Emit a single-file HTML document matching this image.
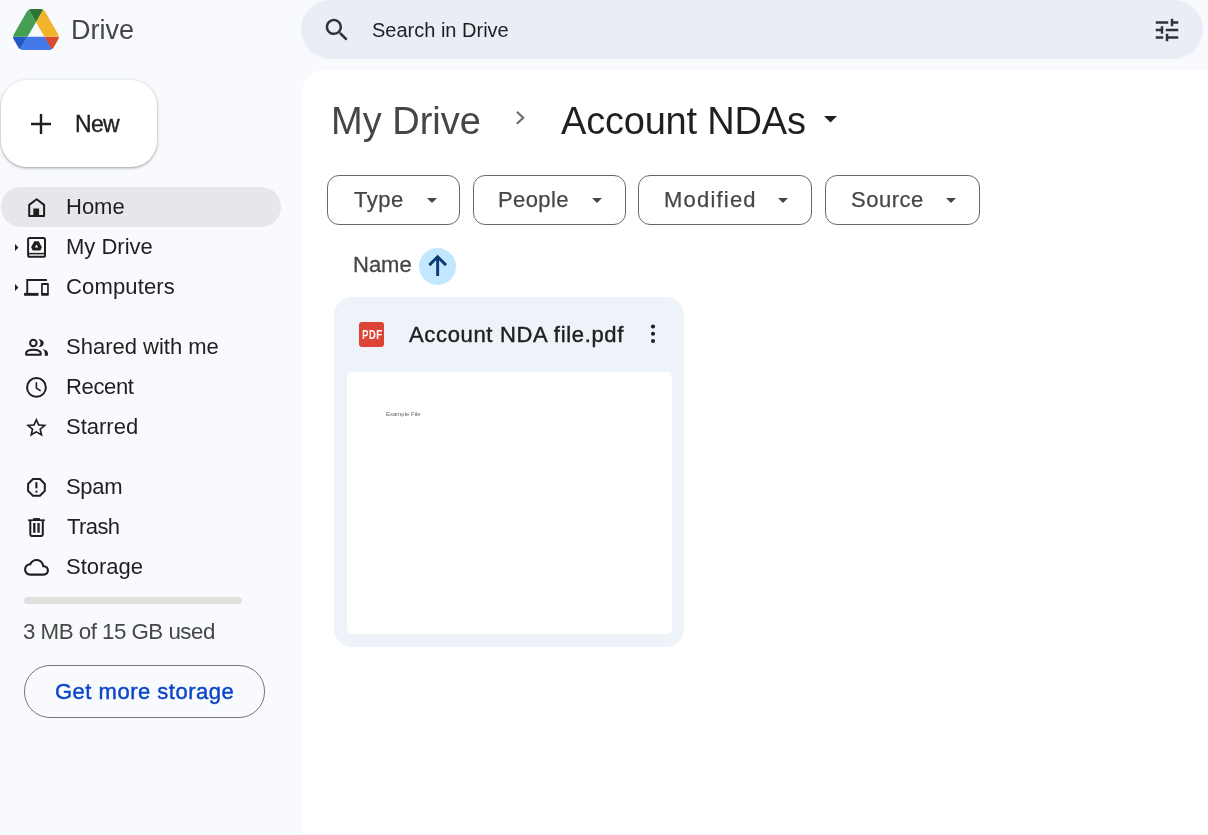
<!DOCTYPE html>
<html><head><meta charset="utf-8">
<style>
html,body{margin:0;padding:0;}
body{width:1208px;height:835px;overflow:hidden;background:#f8fafd;position:relative;font-family:"Liberation Sans",sans-serif;}
.a{position:absolute;}
.t{position:absolute;white-space:nowrap;line-height:1;will-change:transform;}
svg{position:absolute;overflow:visible;}
</style></head><body>

<!-- logo -->
<svg class="a" style="left:13px;top:9px" width="46" height="41" viewBox="0 0 87.3 78">
<path d="m6.6 66.85 3.85 6.65c.8 1.4 1.950 2.5 3.3 3.3l13.75-23.8h-27.5c0 1.55.4 3.1 1.2 4.5z" fill="#2359c4"/>
<path d="m43.65 25-13.75-23.8c-1.35.8-2.5 1.9-3.3 3.3l-25.4 44a9.06 9.06 0 0 0 -1.2 4.5h27.5z" fill="#46a052"/>
<path d="m73.55 76.8c1.350-.8 2.5-1.9 3.3-3.3l1.6-2.75 7.65-13.25c.8-1.4 1.2-2.95 1.2-4.5h-27.502l5.852 11.5z" fill="#d94a30"/>
<path d="m43.65 25 13.75-23.8c-1.35-.8-2.9-1.2-4.5-1.2h-18.5c-1.6 0-3.15.45-4.5 1.2z" fill="#2d7636"/>
<path d="m59.8 53h-32.3l-13.75 23.8c1.35.8 2.9 1.2 4.5 1.2h50.8c1.6 0 3.15-.45 4.5-1.2z" fill="#4479e9"/>
<path d="m73.4 26.5-12.7-22c-.8-1.4-1.95-2.5-3.3-3.3l-13.75 23.8 16.15 28h27.45c0-1.55-.4-3.1-1.2-4.5z" fill="#f1b42c"/>
</svg>
<div class="t" style="left:71px;top:17px;font-size:27px;color:#444746">Drive</div>

<!-- search -->
<div class="a" style="left:301px;top:0px;width:902px;height:59px;border-radius:0 0 30px 30px;background:#e9eef6;border-top-left-radius:30px;border-top-right-radius:30px"></div>
<svg style="left:322px;top:15px" width="30" height="30" viewBox="0 0 24 24"><path fill="#303234" d="M15.5 14h-.79l-.28-.27C15.410 12.59 16 11.11 16 9.5 16 5.91 13.09 3 9.5 3S3 5.91 3 9.5 5.91 16 9.5 16c1.61 0 3.09-.59 4.23-1.57l.27.28v.79l5 4.99L20.49 19l-4.99-5zm-6 0C7.01 14 5 11.99 5 9.5S7.01 5 9.5 5 14 7.01 14 9.5 11.99 14 9.5 14z"/></svg>
<div class="t" style="left:372px;top:20px;font-size:20px;color:#1f1f1f">Search in Drive</div>
<svg style="left:1152px;top:15px" width="30" height="30" viewBox="0 0 24 24"><path fill="#303234" d="M3 17v2h6v-2H3zM3 5v2h10V5H3zm10 16v-2h8v-2h-8v-2h-2v6h2zM7 9v2H3v2h4v2h2V9H7zm14 4v-2H11v2h10zm-6-4h2V7h4V5h-4V3h-2v6z"/></svg>

<!-- New button -->
<div class="a" style="left:1px;top:80px;width:156px;height:87px;border-radius:26px;background:#fff;box-shadow:0 1px 2px 0 rgba(60,64,67,.3),0 1px 3px 1px rgba(60,64,67,.15)"></div>
<svg style="left:31px;top:114px" width="20" height="20" viewBox="0 0 20 20"><path d="M10 0v20M0 10h20" stroke="#1f1f1f" stroke-width="2.4"/></svg>
<div class="t" style="left:75px;top:113px;font-size:23px;color:#1f1f1f;letter-spacing:-0.7px;-webkit-text-stroke:0.35px #1f1f1f">New</div>

<!-- nav -->
<div class="a" style="left:1px;top:187px;width:280px;height:40px;border-radius:20px;background:#e6e7ea"></div>
<div class="t" style="left:66px;top:195.5px;font-size:22px;color:#1f1f1f">Home</div>
<div class="t" style="left:66px;top:235.5px;font-size:22px;color:#1f1f1f">My Drive</div>
<div class="t" style="left:66px;top:275.5px;font-size:22px;color:#1f1f1f;letter-spacing:0.15px">Computers</div>
<div class="t" style="left:66px;top:335.5px;font-size:22px;color:#1f1f1f">Shared with me</div>
<div class="t" style="left:66px;top:375.5px;font-size:22px;color:#1f1f1f;letter-spacing:-0.35px">Recent</div>
<div class="t" style="left:66px;top:415.5px;font-size:22px;color:#1f1f1f">Starred</div>
<div class="t" style="left:66px;top:475.5px;font-size:22px;color:#1f1f1f;letter-spacing:-0.3px">Spam</div>
<div class="t" style="left:67px;top:515.5px;font-size:22px;color:#1f1f1f;letter-spacing:-0.6px">Trash</div>
<div class="t" style="left:66px;top:555.5px;font-size:22px;color:#1f1f1f">Storage</div>

<!-- nav icons -->
<svg style="left:0;top:0" width="60" height="600" viewBox="0 0 60 600">
 <!-- home -->
 <path d="M29.2 215.9V204.9L36.65 199.3L44.1 204.9V215.9Z" fill="none" stroke="#1f1f1f" stroke-width="2" stroke-linejoin="round"/>
 <rect x="33.3" y="208.5" width="5.8" height="7.5" fill="#1f1f1f"/>
 <!-- arrows -->
 <path d="M15 244L18.4 247.5L15 251Z" fill="#1f1f1f"/>
 <path d="M15 284L18.4 287.5L15 291Z" fill="#1f1f1f"/>
 <!-- my drive -->
 <rect x="28.1" y="237.9" width="16.9" height="18.9" rx="1.6" fill="none" stroke="#1f1f1f" stroke-width="2"/>
 <path d="M28.1 253.6H45" stroke="#1f1f1f" stroke-width="1.5"/>
 <path fill-rule="evenodd" fill="#1f1f1f" d="M34.3 241.2H38.7L41.9 247.3L40.3 250.5H32.7L31.1 247.3ZM36.5 244.6L38.2 247.5H34.8Z"/>
 <!-- computers -->
 <path d="M26.3 280H46.9M27.25 279.5V293.5" fill="none" stroke="#1f1f1f" stroke-width="1.9"/>
 <rect x="24.1" y="292.9" width="14.4" height="2.9" fill="#1f1f1f"/>
 <path fill-rule="evenodd" fill="#1f1f1f" d="M41.9 283.1H48C48.5 283.1 48.8 283.4 48.8 283.9V295C48.8 295.5 48.5 295.8 48 295.8H41.9C41.4 295.8 41.1 295.5 41.1 295V283.9C41.1 283.4 41.4 283.1 41.9 283.1ZM42.8 285V292.9H47.1V285Z"/>
 <!-- shared -->
 <circle cx="33.35" cy="342.95" r="3.25" fill="none" stroke="#1f1f1f" stroke-width="2"/>
 <path d="M26.1 354.8V353.4C26.1 350.8 29.5 349.8 33.4 349.8C37.3 349.8 40.7 350.8 40.7 353.4V354.8Z" fill="none" stroke="#1f1f1f" stroke-width="2" stroke-linejoin="round"/>
 <path d="M38.5 339.3C41.5 339.3 43.7 341 43.7 343.2C43.7 345.4 41.5 347.1 38.5 347.1C39.8 346 40.5 344.6 40.5 343.2C40.5 341.8 39.8 340.4 38.5 339.3Z" fill="#1f1f1f"/>
 <path d="M42.5 349C45.8 349.6 47.9 351.2 47.9 353.3V355.7H44.8V353.3C44.8 351.6 44 350.1 42.5 349Z" fill="#1f1f1f"/>
 <!-- recent -->
 <circle cx="36.45" cy="387.45" r="9.4" fill="none" stroke="#1f1f1f" stroke-width="2"/>
 <path d="M36.4 382.2V388.1L40.7 390.9" fill="none" stroke="#1f1f1f" stroke-width="1.6" stroke-linejoin="round"/>
 <!-- star -->
 <path transform="translate(23.87 415.8) scale(1.04 0.98)" fill="#1f1f1f" d="M22 9.24l-7.19-.62L12 2 9.19 8.63 2 9.24l5.46 4.73L5.82 21 12 17.27 18.18 21l-1.63-7.03L22 9.24zM12 15.4l-3.76 2.27 1-4.28-3.32-2.88 4.38-.38L12 6.1l1.71 4.04 4.38.38-3.32 2.88 1 4.28L12 15.4z" transform-origin="0 0"/>
 <!-- spam -->
 <path d="M32.95 479.1H39.95L44.8 483.95V490.95L39.95 495.8H32.95L28.1 490.95V483.95Z" fill="none" stroke="#1f1f1f" stroke-width="2"/>
 <path d="M36.4 482.2V488.35" stroke="#1f1f1f" stroke-width="2.1"/>
 <circle cx="36.4" cy="491.7" r="1.1" fill="#1f1f1f"/>
 <!-- trash -->
 <path d="M28.1 520.2H44.8" stroke="#1f1f1f" stroke-width="1.7"/>
 <path d="M33.1 520V518.1H40V520Z" fill="#1f1f1f"/>
 <path d="M30.3 520.5V534.6C30.3 535.4 30.9 535.9 31.6 535.9H41.5C42.2 535.9 42.8 535.4 42.8 534.6V520.5" fill="none" stroke="#1f1f1f" stroke-width="2"/>
 <path d="M34.3 523V532.8M38.55 523V532.8" stroke="#1f1f1f" stroke-width="2.3"/>
 <!-- cloud -->
 <path transform="translate(24.1 554.85) scale(1.035 1.04)" fill="#1f1f1f" d="M19.35 10.04C18.67 6.59 15.64 4 12 4 9.110 4 6.6 5.64 5.35 8.04 2.34 8.36 0 10.91 0 14c0 3.31 2.69 6 6 6h13c2.76 0 5-2.24 5-5 0-2.64-2.05-4.78-4.65-4.96zM19 18H6c-2.21 0-4-1.79-4-4 0-2.05 1.53-3.76 3.56-3.97l1.07-.11.5-.95C8.08 7.14 9.94 6 12 6c2.62 0 4.88 1.86 5.39 4.43l.3 1.5 1.53.11c1.56.1 2.78 1.410 2.78 2.96 0 1.65-1.35 3-3 3z"/>
</svg>

<!-- storage -->
<div class="a" style="left:24px;top:597px;width:218px;height:7px;border-radius:4px;background:#dfe1df"></div>
<div class="t" style="left:23px;top:620.5px;font-size:22.3px;color:#444746;letter-spacing:-0.5px">3 MB of 15 GB used</div>
<div class="a" style="left:24px;top:665px;width:239px;height:51px;border-radius:26px;border:1px solid #747775"></div>
<div class="t" style="left:55px;top:680.7px;font-size:22px;color:#0a44c8;letter-spacing:0.5px;-webkit-text-stroke:0.4px #0a44c8">Get more storage</div>

<!-- main panel -->
<div class="a" style="left:302px;top:70px;width:906px;height:765px;background:#fff;border-top-left-radius:24px"></div>

<!-- breadcrumb -->
<div class="t" style="left:331px;top:102px;font-size:38px;color:#444746">My Drive</div>
<svg style="left:0;top:0" width="600" height="200" viewBox="0 0 600 200"><path d="M516.9 111.7L523.2 117.75L516.9 123.8" fill="none" stroke="#6b6e6d" stroke-width="2.2"/></svg>
<div class="t" style="left:560.5px;top:102px;font-size:38px;color:#1f1f1f;letter-spacing:-0.2px">Account NDAs</div>
<svg style="left:824px;top:116px" width="13" height="7" viewBox="0 0 13 7"><path d="M0 0h13L6.5 6.5z" fill="#1f1f1f"/></svg>

<!-- chips -->
<div class="a" style="left:327px;top:175px;width:131px;height:48px;border:1px solid #666968;border-radius:12px"></div>
<div class="t" style="left:353.5px;top:188.5px;font-size:22px;color:#444746;-webkit-text-stroke:0.25px #444746;letter-spacing:0.5px">Type</div>
<svg style="left:427px;top:198px" width="10" height="5" viewBox="0 0 10 5"><path d="M0 0h10L5 5z" fill="#444746"/></svg>

<div class="a" style="left:473px;top:175px;width:151px;height:48px;border:1px solid #666968;border-radius:12px"></div>
<div class="t" style="left:498px;top:188.5px;font-size:22px;color:#444746;-webkit-text-stroke:0.25px #444746;letter-spacing:0.4px">People</div>
<svg style="left:592px;top:198px" width="10" height="5" viewBox="0 0 10 5"><path d="M0 0h10L5 5z" fill="#444746"/></svg>

<div class="a" style="left:638px;top:175px;width:172px;height:48px;border:1px solid #666968;border-radius:12px"></div>
<div class="t" style="left:664px;top:188.5px;font-size:22px;color:#444746;-webkit-text-stroke:0.25px #444746;letter-spacing:1.2px">Modified</div>
<svg style="left:778px;top:198px" width="10" height="5" viewBox="0 0 10 5"><path d="M0 0h10L5 5z" fill="#444746"/></svg>

<div class="a" style="left:825px;top:175px;width:153px;height:48px;border:1px solid #666968;border-radius:12px"></div>
<div class="t" style="left:850.5px;top:188.5px;font-size:22px;color:#444746;-webkit-text-stroke:0.25px #444746;letter-spacing:0.5px">Source</div>
<svg style="left:946px;top:198px" width="10" height="5" viewBox="0 0 10 5"><path d="M0 0h10L5 5z" fill="#444746"/></svg>

<!-- name sort -->
<div class="t" style="left:353px;top:254px;font-size:22px;color:#444746;-webkit-text-stroke:0.3px #444746">Name</div>
<div class="a" style="left:419px;top:247.5px;width:37px;height:37px;border-radius:50%;background:#c2e7ff"></div>
<svg style="left:0;top:0" width="500" height="300" viewBox="0 0 500 300"><path d="M437.65 257.5V276M429.3 265.1L437.65 256.8L446 265.1" fill="none" stroke="#0b3b70" stroke-width="2.9"/></svg>

<!-- card -->
<div class="a" style="left:334px;top:297px;width:350px;height:350px;border-radius:18px;background:#eef2f9"></div>
<div class="a" style="left:359px;top:322px;width:25px;height:25px;border-radius:3px;background:#dc4535"></div>
<div class="t" style="left:362.2px;top:328.6px;font-size:12.6px;font-weight:bold;color:#fff;letter-spacing:0.6px;transform:scaleX(0.76);transform-origin:0 0">PDF</div>
<div class="t" style="left:409px;top:323.5px;font-size:22px;color:#1f1f1f;letter-spacing:0.66px;-webkit-text-stroke:0.45px #1f1f1f">Account NDA file.pdf</div>
<svg style="left:640px;top:320px" width="30" height="30" viewBox="0 0 30 30"><circle cx="13" cy="6.5" r="2.05" fill="#1f1f1f"/><circle cx="13" cy="13.8" r="2.05" fill="#1f1f1f"/><circle cx="13" cy="21" r="2.05" fill="#1f1f1f"/></svg>
<div class="a" style="left:347px;top:372px;width:325px;height:262px;border-radius:5px;background:#fff"></div>
<div class="t" style="left:386px;top:410.5px;font-size:6px;color:#666">Example File</div>

</body></html>
